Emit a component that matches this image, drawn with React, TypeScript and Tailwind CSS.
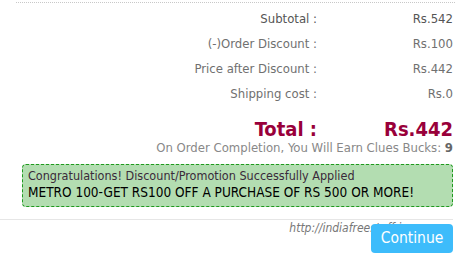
import React from "react";

const rows = [
  { label: "Subtotal :", value: "Rs.542", strong: true },
  { label: "(-)Order Discount :", value: "Rs.100" },
  { label: "Price after Discount :", value: "Rs.442" },
  { label: "Shipping cost :", value: "Rs.0" },
];

export default function App() {
  return (
    <div
      className="w-[475px] h-[263px] bg-white relative overflow-hidden"
      style={{ fontFamily: "'DejaVu Sans Condensed', 'DejaVu Sans', sans-serif" }}
    >
      <div className="ml-[16px] mr-[20px] mt-[2px] border-t border-dotted border-[#c8c8c8]" />
      <div className="flex flex-col pt-[3px]">
        {rows.map((r) => (
          <div key={r.label} className="flex h-[25px] items-center text-[13px] text-[#707070]">
            <div className={`w-[317px] text-right ${r.strong ? "text-[#555]" : ""}`}>{r.label}</div>
            <div className={`w-[136px] text-right ${r.strong ? "text-[#555]" : ""}`}>{r.value}</div>
          </div>
        ))}
      </div>
      <div className="flex items-center h-[26px] mt-[10px] text-[20px] font-bold text-[#99003a]">
        <div className="w-[317px] text-right">Total :</div>
        <div className="w-[136px] text-right">Rs.442</div>
      </div>
      <div className="w-[453px] text-right text-[13px] text-[#888] leading-[16px] mt-[-2px]">
        On Order Completion, You Will Earn Clues Bucks: <span className="font-bold text-[#666]">9</span>
      </div>
      <div className="ml-[22px] w-[431px] mt-[8px] h-[43px] rounded-[4px] border border-dashed border-[#1f9a1f] bg-[#b3ddb1] px-[5px] pt-[3px]">
        <div className="text-[12.5px] leading-[16px] text-[#3a2a3a]">
          Congratulations! Discount/Promotion Successfully Applied
        </div>
        <div className="text-[13.5px] leading-[17px] text-black whitespace-nowrap">
          METRO 100-GET RS100 OFF A PURCHASE OF RS 500 OR MORE!
        </div>
      </div>
      <div className="mt-[12px] w-[453px] border-t border-[#e6e6e6]" />
      <div className="flex justify-end w-[453px] mt-[4px]">
        <div className="relative">
          <span className="absolute right-[45px] top-[-5px] italic text-[12px] text-[#777] whitespace-nowrap">
            http://indiafreestuff.in
          </span>
          <button className="relative w-[82px] h-[29px] rounded-[4px] bg-[#3dbcfb] text-white text-[15.5px]">
            Continue
          </button>
        </div>
      </div>
    </div>
  );
}
